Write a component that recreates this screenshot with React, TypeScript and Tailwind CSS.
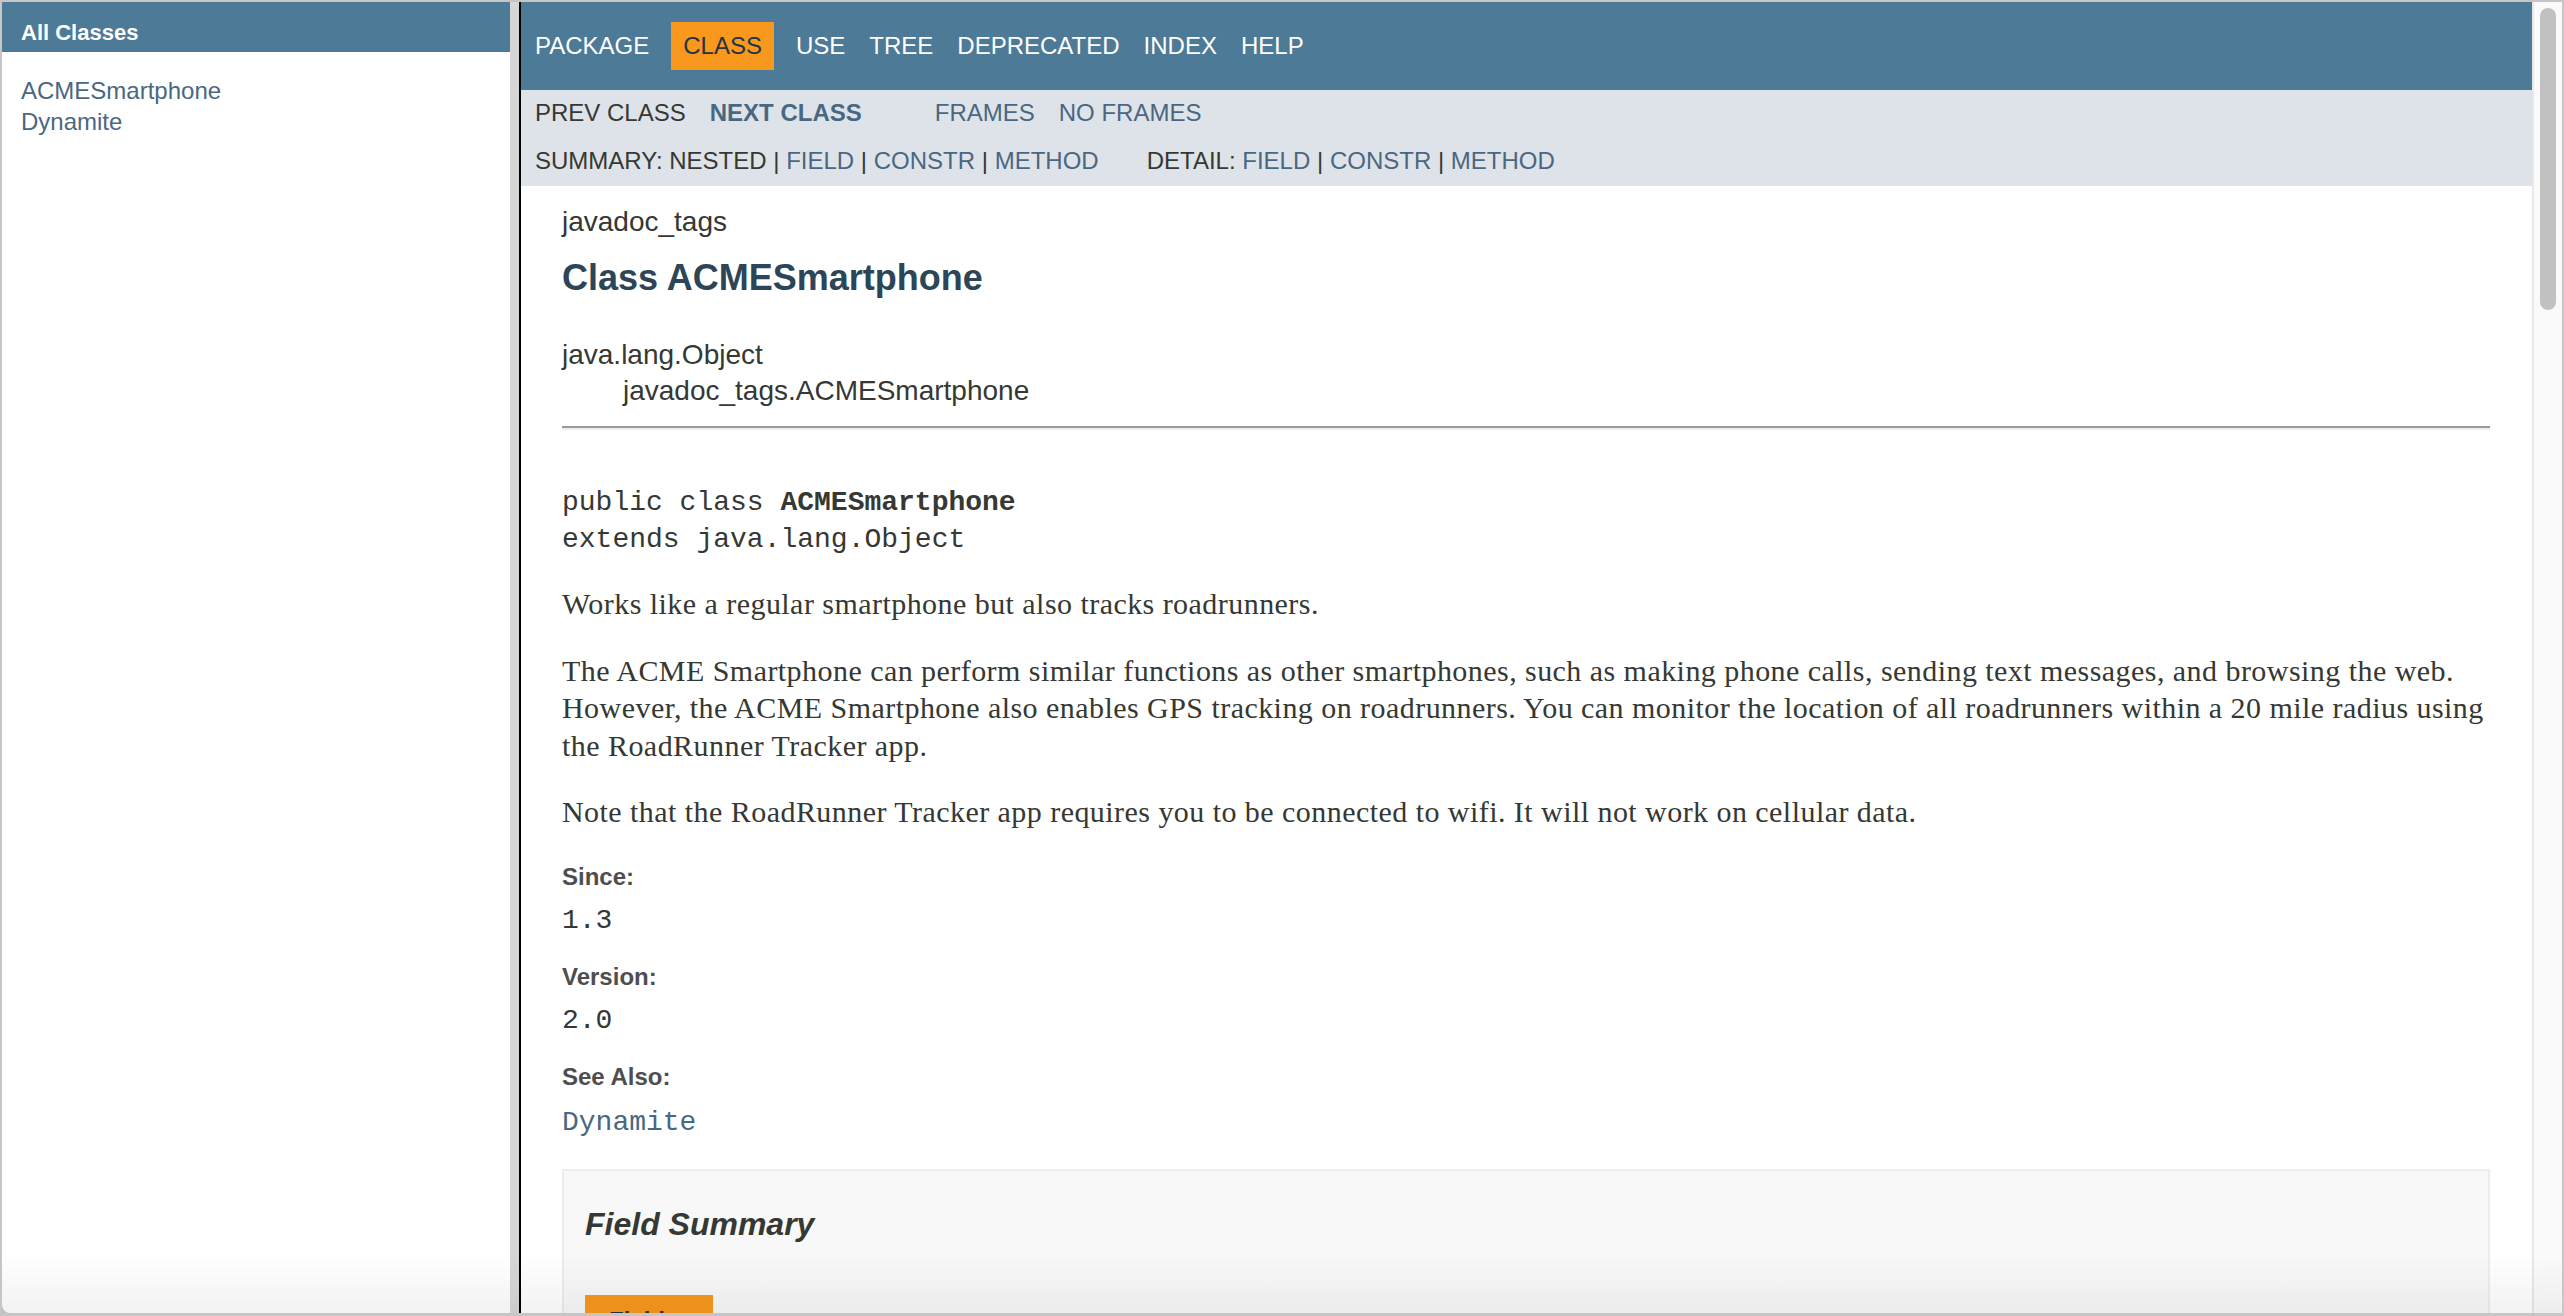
import React from 'react'

const classes = ['ACMESmartphone', 'Dynamite']
const topNav = ['PACKAGE', 'CLASS', 'USE', 'TREE', 'DEPRECATED', 'INDEX', 'HELP']

function AllClassesFrame() {
  return (
    <div className="flex w-[508px] flex-col rounded-bl-[8px] bg-white">
      <h1 className="h-[50px] bg-[#4D7A97] pl-[19px] pt-[18px] text-[22px] leading-[26px] font-bold text-white">
        All Classes
      </h1>
      <ul className="mt-[23px] pl-[19px]">
        {classes.map((c) => (
          <li key={c} className="text-[24px] leading-[31px] text-[#4A6782]">
            {c}
          </li>
        ))}
      </ul>
    </div>
  )
}

function Sep() {
  return <span className="text-[#353833]"> | </span>
}

function NavBars() {
  return (
    <>
      <div className="h-[88px] shrink-0 bg-[#4D7A97] pl-[2px] pt-[20px]">
        <ul className="flex">
          {topNav.map((item) =>
            item === 'CLASS' ? (
              <li key={item} className="mx-[10px] h-[48px] bg-[#F8981D] px-[12px] text-[24px] leading-[48px] text-[#253441]">
                {item}
              </li>
            ) : (
              <li key={item} className="h-[48px] px-[12px] text-[24px] leading-[48px] text-white">
                {item}
              </li>
            ),
          )}
        </ul>
      </div>
      <div className="h-[96px] shrink-0 bg-[#dee3e9] pl-[14px] text-[24px] leading-[28px] whitespace-pre">
        <div className="mt-[9px] flex h-[28px]">
          <span>PREV CLASS</span>
          <span className="ml-[24px] font-bold text-[#4A6782]">NEXT CLASS</span>
          <span className="ml-[73px] text-[#4A6782]">FRAMES</span>
          <span className="ml-[24px] text-[#4A6782]">NO FRAMES</span>
        </div>
        <div className="mt-[20px] flex h-[28px]">
          <span>
            SUMMARY: NESTED
            <Sep />
            <span className="text-[#4A6782]">FIELD</span>
            <Sep />
            <span className="text-[#4A6782]">CONSTR</span>
            <Sep />
            <span className="text-[#4A6782]">METHOD</span>
          </span>
          <span className="ml-[48px]">
            DETAIL: <span className="text-[#4A6782]">FIELD</span>
            <Sep />
            <span className="text-[#4A6782]">CONSTR</span>
            <Sep />
            <span className="text-[#4A6782]">METHOD</span>
          </span>
        </div>
      </div>
    </>
  )
}

function Label({ children, mt }: { children: React.ReactNode; mt: string }) {
  return <div className={`${mt} text-[24px] leading-[30px] font-bold text-[#4E4E4E]`}>{children}</div>
}

function ClassBody() {
  return (
    <div className="flex flex-col pl-[41px] pr-[42px]">
      <div className="mt-[18px] text-[28px] leading-[36px]">javadoc_tags</div>
      <h2 className="mt-[16px] text-[36px] leading-[44px] font-bold text-[#2c4557]">Class ACMESmartphone</h2>
      <div className="mt-[37px] text-[28px] leading-[36px]">java.lang.Object</div>
      <div className="pl-[61px] text-[28px] leading-[36px]">javadoc_tags.ACMESmartphone</div>
      <div className="mt-[17px] border-t-2 border-b-2 border-t-[#9a9a9a] border-b-[#eeeeee]" />

      <pre className="mt-[54px] font-['Liberation_Mono','Courier_New',monospace] text-[28px] leading-[37px]">
        public class <b>ACMESmartphone</b>
        {'\n'}extends java.lang.Object
      </pre>

      <div className="font-['Liberation_Serif','Times_New_Roman',serif] text-[30px] leading-[37.5px] tracking-[0.45px] whitespace-nowrap">
        <p className="mt-[27px]">Works like a regular smartphone but also tracks roadrunners.</p>
        <p className="mt-[29px]">
          The ACME Smartphone can perform similar functions as other smartphones, such as making phone calls, sending text messages, and browsing the web.
          <br />
          However, the ACME Smartphone also enables GPS tracking on roadrunners. You can monitor the location of all roadrunners within a 20 mile radius using
          <br />
          the RoadRunner Tracker app.
        </p>
        <p className="mt-[29px]">Note that the RoadRunner Tracker app requires you to be connected to wifi. It will not work on cellular data.</p>
      </div>

      <Label mt="mt-[31px]">Since:</Label>
      <div className="mt-[14px] font-['Liberation_Mono','Courier_New',monospace] text-[28px] leading-[30px]">1.3</div>
      <Label mt="mt-[26px]">Version:</Label>
      <div className="mt-[14px] font-['Liberation_Mono','Courier_New',monospace] text-[28px] leading-[30px]">2.0</div>
      <Label mt="mt-[26px]">See Also:</Label>
      <div className="mt-[16px] font-['Liberation_Mono','Courier_New',monospace] text-[28px] leading-[30px] text-[#4A6782]">
        Dynamite
      </div>

      <div className="mt-[31px] border-2 border-[#ededed] bg-[#f8f8f8] pl-[21px] pt-[33px] pb-[20px]">
        <h3 className="text-[32px] leading-[40px] font-bold italic">Field Summary</h3>
        <div className="mt-[51px] h-[46px] w-[128px] bg-[#F8981D] pl-[24px] pt-[12px] text-[24px] leading-[28px] font-bold text-[#253441]">
          Fields
        </div>
      </div>
    </div>
  )
}

function Scrollbar() {
  return (
    <div className="w-[30px] shrink-0 border-l-2 border-[#e8e8e8] bg-[#fafafa] pl-[6px] pt-[6px]">
      <div className="h-[302px] w-[16px] rounded-full bg-[#c1c1c1]" />
    </div>
  )
}

export default function App() {
  return (
    <div className="relative flex h-[1316px] w-[2564px] overflow-hidden bg-[#c6c6c6] px-[2px] pt-[2px] pb-[3px] font-['Liberation_Sans',Arial,Helvetica,sans-serif] text-[#353833]">
      <AllClassesFrame />
      <div className="w-[9px] shrink-0 bg-[#d6d6d6]" />
      <div className="w-[2px] shrink-0 bg-black" />
      <div className="flex min-w-0 flex-1 bg-white">
        <div className="flex min-w-0 flex-1 flex-col overflow-hidden">
          <NavBars />
          <ClassBody />
        </div>
        <Scrollbar />
      </div>
      <div className="pointer-events-none absolute right-[2px] bottom-[3px] left-[2px] h-[60px] bg-linear-to-b from-transparent to-black/5" />
    </div>
  )
}
